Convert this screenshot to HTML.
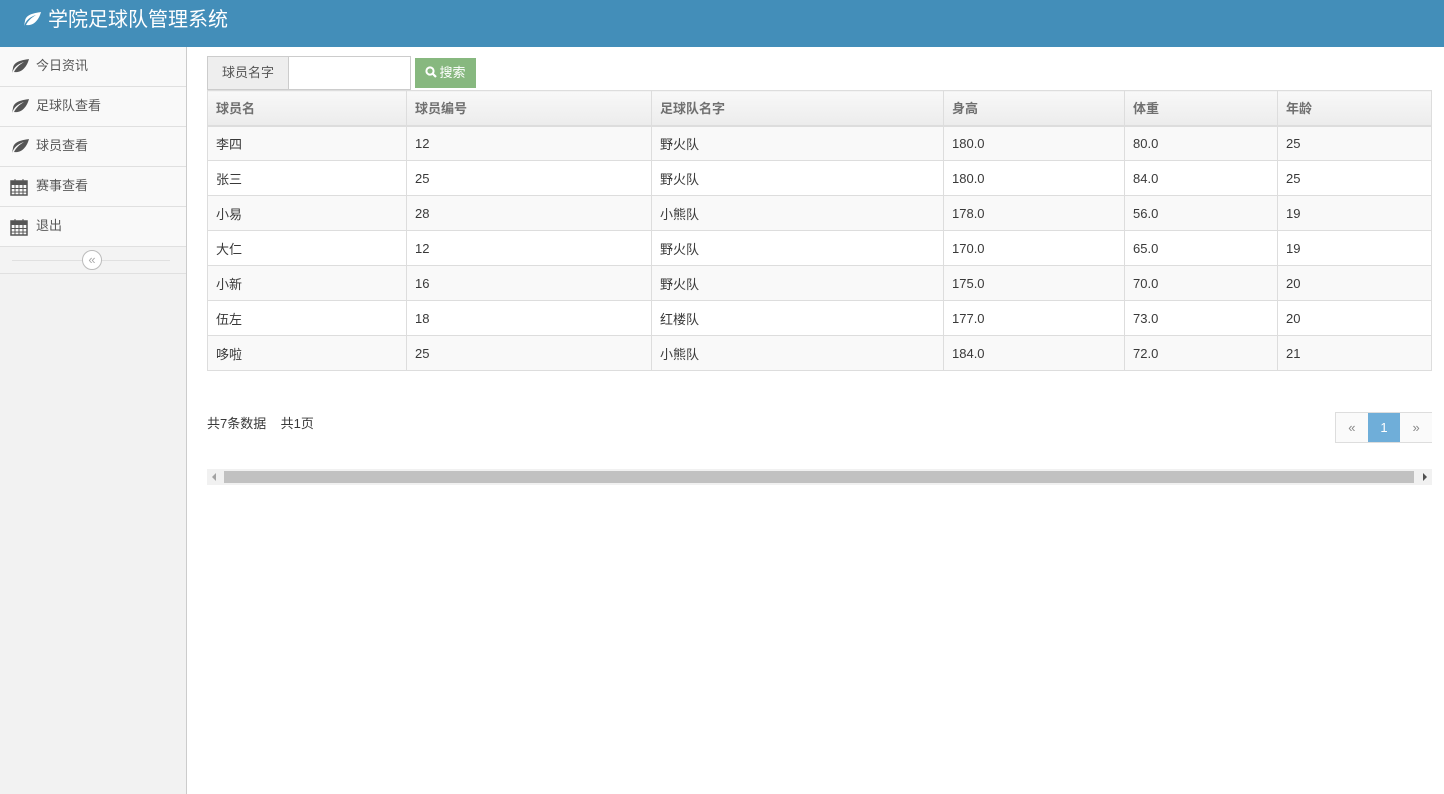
<!DOCTYPE html>
<html><head><meta charset="utf-8"><style>
*{box-sizing:border-box;margin:0;padding:0}
body{width:1444px;height:794px;overflow:hidden;background:#fff;font-family:"Liberation Sans","Noto Sans CJK SC",sans-serif;font-size:13px;color:#393939;position:relative}
.hd{position:absolute;left:0;top:0;width:1444px;height:47px;background:#438eb9;color:#fff;font-size:20px;line-height:40px;padding-left:22px}
.sb{position:absolute;left:0;top:47px;width:187px;height:747px;background:#f2f2f2;border-right:1px solid #ccc}
.mi{height:40px;border-bottom:1px solid #e0e0e0;background:#f9f9f9;line-height:38px;padding-left:36px;position:relative;color:#585858}
.mi svg{position:absolute;left:10px;top:11px}
.col{height:27px;border-bottom:1px solid #e0e0e0;position:relative;background:#f3f3f3}
.col .ln{position:absolute;left:12px;right:16px;top:13px;border-top:1px solid #e0e0e0}
.col .c{position:absolute;left:82px;top:3px;width:20px;height:20px;border:1px solid #bbb;border-radius:50%;background:#fff;text-align:center;line-height:17px;font-size:13px;color:#aaa}
table{position:absolute;left:207px;top:90px;border-collapse:collapse;width:1225px}
td,th{border:1px solid #ddd;height:35px;padding:0 8px;text-align:left;font-weight:normal}
th{background:linear-gradient(#f8f8f8,#ececec);color:#707070;font-weight:bold;border-bottom:2px solid #ddd}
tr:nth-child(even) td{background:#f9f9f9}
</style></head><body>
<div class="hd"><svg width="20" height="16" viewBox="0 0 20 16" style="vertical-align:-1px;margin-right:6px"><path d="M2 15C4 9 8 6 14 4C9 7 6 10 4 14C9 15 16 12 19 1C13 2 4 3 3 10" fill="#fff"/></svg>学院足球队管理系统</div>
<div class="sb">
<div class="mi"><svg width="20" height="16" viewBox="0 0 20 16"><path d="M2 15C4 9 8 6 14 4C9 7 6 10 4 14C9 15 16 12 19 1C13 2 4 3 3 10" fill="#555"/></svg>今日资讯</div>
<div class="mi"><svg width="20" height="16" viewBox="0 0 20 16"><path d="M2 15C4 9 8 6 14 4C9 7 6 10 4 14C9 15 16 12 19 1C13 2 4 3 3 10" fill="#555"/></svg>足球队查看</div>
<div class="mi"><svg width="20" height="16" viewBox="0 0 20 16"><path d="M2 15C4 9 8 6 14 4C9 7 6 10 4 14C9 15 16 12 19 1C13 2 4 3 3 10" fill="#555"/></svg>球员查看</div>
<div class="mi"><svg width="18" height="18" viewBox="0 0 18 18"><rect x="1" y="3" width="16" height="14" fill="none" stroke="#555" stroke-width="1.5"/><rect x="1" y="3" width="16" height="4" fill="#555"/><path d="M5 1v4M13 1v4M1 10.5h16M1 14h16M5 7v10M9 7v10M13 7v10" stroke="#555"/></svg>赛事查看</div>
<div class="mi"><svg width="18" height="18" viewBox="0 0 18 18"><rect x="1" y="3" width="16" height="14" fill="none" stroke="#555" stroke-width="1.5"/><rect x="1" y="3" width="16" height="4" fill="#555"/><path d="M5 1v4M13 1v4M1 10.5h16M1 14h16M5 7v10M9 7v10M13 7v10" stroke="#555"/></svg>退出</div>
<div class="col"><div class="ln"></div><div class="c">«</div></div>
</div>
<div style="position:absolute;left:207px;top:56px;width:204px;height:34px;border:1px solid #ccc;background:#fff"><div style="width:81px;height:32px;background:#eee;border-right:1px solid #ccc;line-height:32px;text-align:center;color:#555">球员名字</div></div>
<div style="position:absolute;left:415px;top:58px;width:61px;height:30px;background:#87b87f;color:#fff;line-height:30px;text-align:center"><svg width="12" height="12" viewBox="0 0 12 12" style="vertical-align:-1px;margin-right:2px"><circle cx="5" cy="5" r="3.6" fill="none" stroke="#fff" stroke-width="2"/><path d="M7.5 7.5L11 11" stroke="#fff" stroke-width="2.2"/></svg>搜索</div>
<table>
<tr><th style="width:199px">球员名</th><th style="width:245px">球员编号</th><th style="width:292px">足球队名字</th><th style="width:181px">身高</th><th style="width:153px">体重</th><th>年龄</th></tr>
<tr><td>李四</td><td>12</td><td>野火队</td><td>180.0</td><td>80.0</td><td>25</td></tr>
<tr><td>张三</td><td>25</td><td>野火队</td><td>180.0</td><td>84.0</td><td>25</td></tr>
<tr><td>小易</td><td>28</td><td>小熊队</td><td>178.0</td><td>56.0</td><td>19</td></tr>
<tr><td>大仁</td><td>12</td><td>野火队</td><td>170.0</td><td>65.0</td><td>19</td></tr>
<tr><td>小新</td><td>16</td><td>野火队</td><td>175.0</td><td>70.0</td><td>20</td></tr>
<tr><td>伍左</td><td>18</td><td>红楼队</td><td>177.0</td><td>73.0</td><td>20</td></tr>
<tr><td>哆啦</td><td>25</td><td>小熊队</td><td>184.0</td><td>72.0</td><td>21</td></tr>
</table>
<div style="position:absolute;left:207px;top:413px;color:#393939">共7条数据&nbsp;&nbsp;&nbsp;&nbsp;共1页</div>
<div style="position:absolute;left:1335px;top:412px;height:31px;width:97px;border:1px solid #ddd;border-right:none;background:#fafafa;display:flex;line-height:29px;text-align:center;color:#888">
<div style="width:32px">«</div><div style="width:33px;background:#6faed9;color:#fff">1</div><div style="width:32px">»</div></div>
<div style="position:absolute;left:207px;top:469px;width:1225px;height:16px;background:#f1f1f1"><div style="position:absolute;left:17px;right:18px;top:2px;height:12px;background:#c1c1c1"></div><div style="position:absolute;left:5px;top:4px;border:4px solid transparent;border-right-color:#a3a3a3;border-left:none"></div><div style="position:absolute;right:5px;top:4px;border:4px solid transparent;border-left-color:#505050;border-right:none"></div></div>
</body></html>
